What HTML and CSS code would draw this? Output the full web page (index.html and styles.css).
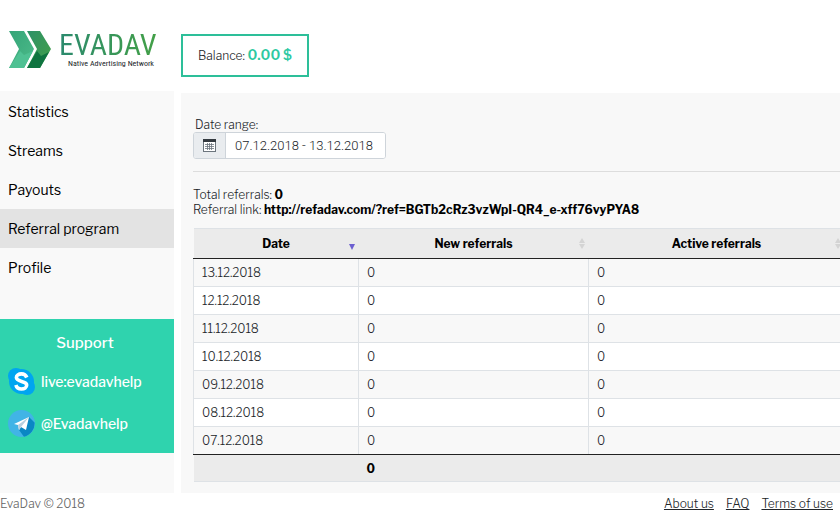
FILE: index.html
```html
<!DOCTYPE html>
<html lang="en">
<head>
  <meta charset="UTF-8">
  <title>EvaDav - Referral program</title>
  <link rel="stylesheet" href="styles.css">
</head>
<body>

  <header class="header">
    <a class="logo" href="#">
      <svg class="logo-mark" width="42" height="38" viewBox="0 0 42 38">
        <defs>
          <linearGradient id="g1" x1="0" y1="0" x2="1" y2="1">
            <stop offset="0" stop-color="#35a578"/>
            <stop offset="1" stop-color="#4dbb8a"/>
          </linearGradient>
          <linearGradient id="g2" x1="0" y1="0" x2="1" y2="1">
            <stop offset="0" stop-color="#2d9168"/>
            <stop offset="1" stop-color="#43a047"/>
          </linearGradient>
        </defs>
        <path d="M0 1h15l10 18-10 19H0l10-19z" fill="url(#g1)"/>
        <path d="M11 21l4 4 9-4-9 17H0z" fill="#4fc193"/>
        <path d="M18 1h13l11 18-11 19H18l10-19z" fill="url(#g2)"/>
        <path d="M28 21l4 5 8-4-9 16H18z" fill="#0f7440"/>
      </svg>
      <span class="logo-text">
        <span class="logo-name">EVADAV</span>
        <span class="logo-tagline">Native Advertising Network</span>
      </span>
    </a>
    <div class="balance">Balance: <b>0.00 $</b></div>
  </header>

  <div class="page">
    <aside class="sidebar">
      <nav class="menu">
        <a href="#">Statistics</a>
        <a href="#">Streams</a>
        <a href="#">Payouts</a>
        <a href="#" class="active">Referral program</a>
        <a href="#">Profile</a>
      </nav>
      <div class="support">
        <h2>Support</h2>
        <a href="#">
          <svg width="27" height="27" viewBox="0 0 27 27">
            <circle cx="13.500" cy="13.500" r="12.500" fill="#00a5f0"/>
            <circle cx="8" cy="8" r="8" fill="#00a5f0"/>
            <circle cx="19" cy="19" r="8" fill="#00a5f0"/>
            <path d="M18.800 9.500c-1-2.600-3-3.600-5.400-3.600-2.800 0-5 1.400-5 3.700 0 5 10.300 2.600 10.300 7.400 0 2.500-2.400 4-5.200 4-2.800 0-4.900-1.200-5.600-4" fill="none" stroke="#fff" stroke-width="3.600"/>
          </svg>
          live:evadavhelp
        </a>
        <a href="#">
          <svg width="27" height="27" viewBox="0 0 27 27">
            <circle cx="13.500" cy="13.500" r="13.500" fill="#41b4e6"/>
            <path d="M21 7l5.500 5.500A13.500 13.500 0 0 1 16 26.800L11 20z" fill="#0a87c4"/>
            <path d="M6 14L21 7l-3 13-5-3-2 3-1-5z" fill="#fff"/>
            <path d="M10 15l11-8-8 10-2 3z" fill="#b8cfdf"/>
          </svg>
          @Evadavhelp
        </a>
      </div>
    </aside>

    <main class="content">
      <form class="filter">
        <label for="range">Date range:</label>
        <div class="input-group">
          <span class="addon">
            <svg width="13" height="13" viewBox="0 0 13 13">
              <rect x="0.500" y="0.500" width="12" height="12" fill="#fff" stroke="#6c757d"/>
              <rect width="13" height="3" fill="#343a40"/>
              <path d="M2 5.500h9M2 7.500h9M2 9.500h9M4.500 4v7M6.500 4v7M8.500 4v7" stroke="#6c757d" stroke-width="0.800"/>
            </svg>
          </span>
          <input type="text" id="range" value="07.12.2018 - 13.12.2018">
        </div>
      </form>

      <div class="summary">
        <div>Total referrals: <b>0</b></div>
        <div>Referral link: <b>http://refadav.com/?ref=BGTb2cRz3vzWpI-QR4_e-xff76vyPYA8</b></div>
      </div>

      <table class="report">
        <colgroup>
          <col class="col-date">
          <col class="col-new">
          <col>
        </colgroup>
        <thead>
          <tr>
            <th class="sort-desc">Date</th>
            <th class="sort">New referrals</th>
            <th class="sort">Active referrals</th>
          </tr>
        </thead>
        <tbody>
          <tr><td>13.12.2018</td><td>0</td><td>0</td></tr>
          <tr><td>12.12.2018</td><td>0</td><td>0</td></tr>
          <tr><td>11.12.2018</td><td>0</td><td>0</td></tr>
          <tr><td>10.12.2018</td><td>0</td><td>0</td></tr>
          <tr><td>09.12.2018</td><td>0</td><td>0</td></tr>
          <tr><td>08.12.2018</td><td>0</td><td>0</td></tr>
          <tr><td>07.12.2018</td><td>0</td><td>0</td></tr>
        </tbody>
        <tfoot>
          <tr><td></td><td>0</td><td></td></tr>
        </tfoot>
      </table>
    </main>
  </div>

  <footer class="footer">
    <span>EvaDav © 2018</span>
    <nav>
      <a href="#">About us</a>
      <a href="#">FAQ</a>
      <a href="#">Terms of use</a>
    </nav>
  </footer>

</body>
</html>
```
FILE: styles.css
```css
* {
  box-sizing: border-box;
}
body {
  margin: 0;
  font-family: "Libre Franklin", Inter, sans-serif;
  font-size: 12px;
  font-weight: 300;
  line-height: 15px;
  color: #212529;
  background-color: #fff;
  overflow-x: hidden;
}
a {
  color: inherit;
  text-decoration: none;
}
b {
  font-weight: 700;
  color: #000;
}

/* header */
.header {
  display: flex;
  align-items: center;
  padding-top: 20px;
  height: 91px;
}
.logo {
  display: flex;
  align-items: flex-start;
  width: 181px;
  height: 52px;
  padding-left: 9px;
  gap: 8px;
}
.logo-text {
  display: flex;
  flex-direction: column;
}
.logo-name {
  font-family: "Roboto Condensed", Roboto, sans-serif;
  font-size: 30px;
  font-weight: 400;
  line-height: 30px;
  background: linear-gradient(90deg, #2b8a6e, #43a047);
  -webkit-background-clip: text;
  background-clip: text;
  color: transparent;
}
.logo-tagline {
  padding-left: 9px;
  font-family: "Roboto Condensed", Roboto, sans-serif;
  font-size: 8px;
  font-weight: 400;
  line-height: 8px;
  white-space: nowrap;
}
.balance {
  padding: 10px 15px;
  border: 2px solid #2dbf99;
  line-height: 18px;
}
.balance b {
  font-size: 14px;
  font-weight: 600;
  color: #2dc9a2;
}

/* layout */
.page {
  display: grid;
  grid-template-columns: 174px minmax(0, 1fr);
  column-gap: 7px;
}
.sidebar {
  background-color: #f9f9f9;
}
.menu {
  padding-top: 1px;
}
.menu a {
  display: block;
  padding: 0 8px;
  font-size: 14px;
  font-weight: 400;
  line-height: 39px;
  color: #000;
}
.menu a.active {
  background-color: #e3e3e3;
}
.support {
  margin-top: 32px;
  padding: 16px 8px;
  background-color: #2fd3ae;
  color: #fff;
}
.support h2 {
  margin: 0 0 16px;
  padding-right: 4px;
  font-size: 15px;
  font-weight: 500;
  line-height: 17px;
  text-align: center;
}
.support a {
  display: flex;
  align-items: center;
  gap: 6px;
  font-size: 14px;
  font-weight: 500;
}
.support a + a {
  margin-top: 15px;
}

/* content */
.content {
  margin-top: 2px;
  padding: 24px 0 11px 12px;
  background-color: #f8f8f8;
  overflow: hidden;
}
.filter {
  padding-bottom: 12px;
  border-bottom: 1px solid #ddd;
}
.filter label {
  display: block;
  padding-left: 2px;
}
.input-group {
  display: flex;
  width: 193px;
  height: 27px;
  border: 1px solid #ced4da;
  border-radius: 3px;
  background-color: #fff;
  overflow: hidden;
}
.addon {
  display: flex;
  align-items: center;
  justify-content: center;
  flex: 0 0 32px;
  background-color: #e9ecef;
  border-right: 1px solid #ced4da;
}
.input-group input {
  flex: 1;
  min-width: 0;
  padding: 0 9px;
  border: 0;
  font-family: Roboto, sans-serif;
  font-size: 13px;
  font-weight: 300;
  color: #212529;
}
.summary {
  margin: 15px 0 11px;
}
.report {
  width: calc(100% + 5px);
  table-layout: fixed;
  border-collapse: collapse;
}
.col-date {
  width: 165px;
}
.col-new {
  width: 230px;
}
.report th {
  position: relative;
  height: 30px;
  padding: 0;
  border-top: 1px solid #dee2e6;
  border-bottom: 1px solid #222;
  background-color: #ebebeb;
  font-weight: 700;
  color: #000;
}
.sort::before,
.sort::after,
.sort-desc::after {
  content: "";
  position: absolute;
  right: 4px;
  border: 3px solid transparent;
}
.sort::before {
  top: 6px;
  border-bottom: 5px solid #d4d4d4;
}
.sort::after {
  top: 15px;
  border-top: 5px solid #d4d4d4;
}
.sort-desc::after {
  top: 15px;
  border-top: 6px solid #6c5fd0;
}
.report td {
  height: 28px;
  padding: 0 8px;
  border: 1px solid #dee2e6;
}
.report tbody tr {
  background-color: #fff;
}
.report tbody tr:nth-child(odd) {
  background-color: #f8f8f8;
}
.report tbody tr:last-child td {
  border-bottom-color: #222;
}
.report tfoot td {
  height: 27px;
  border-width: 1px 0;
  border-top-color: #222;
  background-color: #ebebeb;
  font-weight: 700;
  color: #000;
}

/* footer */
.footer {
  display: flex;
  justify-content: space-between;
  padding: 3px 7px 0 0;
  color: #666;
}
.footer nav {
  display: flex;
  gap: 12px;
}
.footer nav a {
  color: #212529;
  text-decoration: underline;
}
```
